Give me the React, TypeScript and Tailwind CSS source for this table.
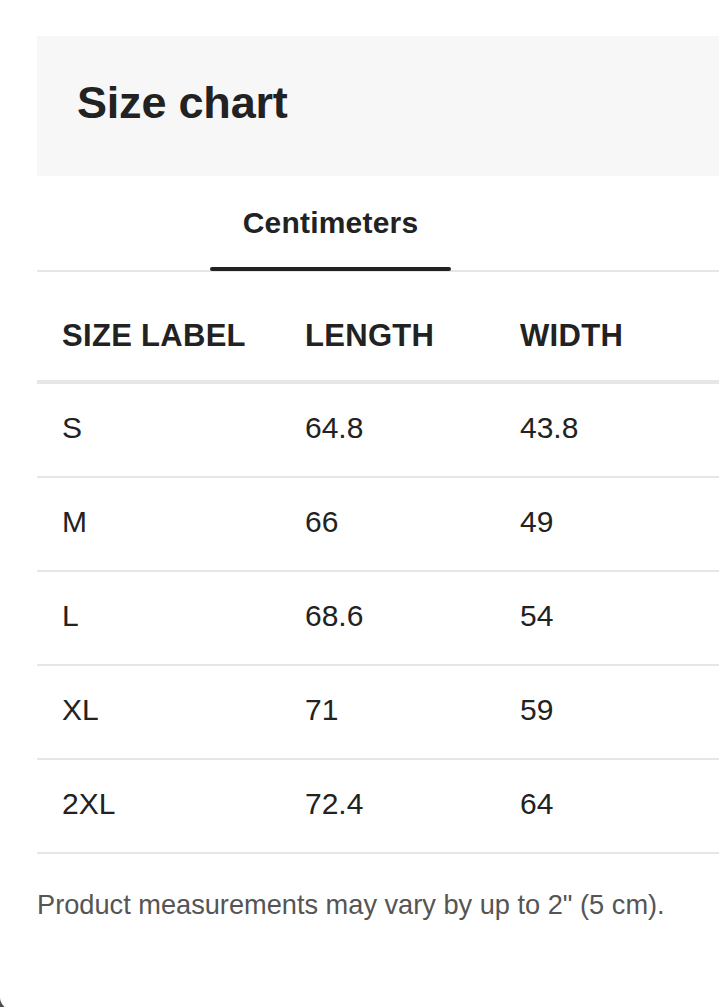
import React from "react";

type Row = {
    size: string;
    length: string;
    width: string;
};

const rows: Row[] = [
    { size: "S", length: "64.8", width: "43.8" },
    { size: "M", length: "66", width: "49" },
    { size: "L", length: "68.6", width: "54" },
    { size: "XL", length: "71", width: "59" },
    { size: "2XL", length: "72.4", width: "64" },
];

export default function App() {
    return (
        <div className="h-[1007px] w-[719px] overflow-hidden bg-[#4d4d4d] font-['Liberation_Sans',Arial,sans-serif]">
            <div className="h-[1010px] overflow-hidden rounded-bl-[13px] bg-white pl-[37px] pt-[36px]">
                <div className="w-[720px]">
                    {/* Header */}
                    <div className="flex h-[140px] items-center bg-[#f7f7f7] pb-[8px] pl-[40px]">
                        <h2 className="text-[45px] leading-none font-bold tracking-[-0.2px] text-[#222]">Size chart</h2>
                    </div>

                    {/* Tabs */}
                    <div className="flex h-[96px] border-b-2 border-[#e6e6e6] pl-[173px]">
                        <button className="relative flex h-[94px] w-[241px] items-center justify-center">
                            <span className="text-[30px] leading-none font-bold tracking-[0.2px] text-[#222]">Centimeters</span>
                            <span className="absolute bottom-[-1px] left-0 h-[4px] w-full rounded-full bg-[#222]"></span>
                        </button>
                    </div>

                    {/* Table head */}
                    <div className="grid h-[112px] grid-cols-[243px_215px_1fr] items-center border-b-4 border-[#e6e6e6] pl-[25px] pt-[18px] text-[31px] leading-none font-bold tracking-[0.3px] text-[#222]">
                        <div>SIZE LABEL</div>
                        <div>LENGTH</div>
                        <div>WIDTH</div>
                    </div>

                    {/* Rows */}
                    {rows.map((row) => (
                        <div
                            key={row.size}
                            className="grid h-[94px] grid-cols-[243px_215px_1fr] items-center border-b-2 border-[#e6e6e6] pb-[4px] pl-[25px] text-[30px] leading-none text-[#222]"
                        >
                            <div>{row.size}</div>
                            <div>{row.length}</div>
                            <div>{row.width}</div>
                        </div>
                    ))}

                    <p className="mt-[35px] text-[27.2px] leading-[32px] text-[#555]">
                        Product measurements may vary by up to 2" (5 cm).
                    </p>
                </div>
            </div>
        </div>
    );
}
